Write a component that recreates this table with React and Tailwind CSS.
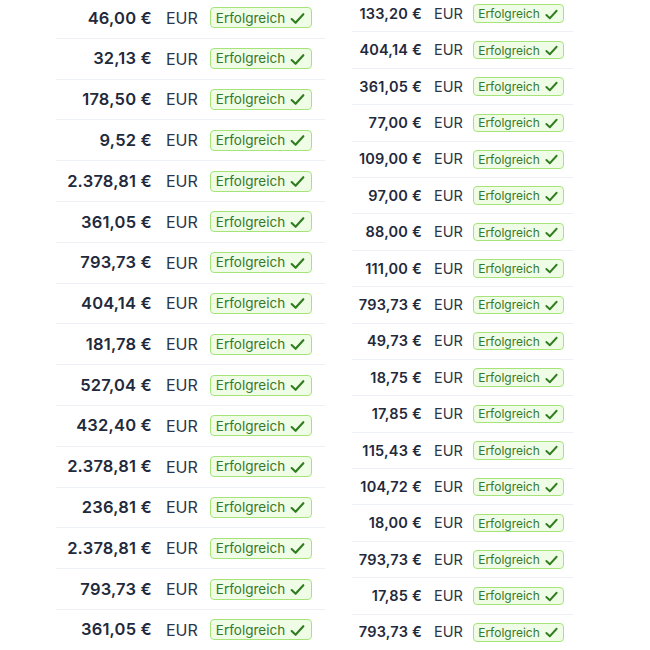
const left = [
  '46,00', '32,13', '178,50', '9,52', '2.378,81', '361,05', '793,73', '404,14',
  '181,78', '527,04', '432,40', '2.378,81', '236,81', '2.378,81', '793,73', '361,05',
]

const right = [
  '133,20', '404,14', '361,05', '77,00', '109,00', '97,00', '88,00', '111,00', '793,73',
  '49,73', '18,75', '17,85', '115,43', '104,72', '18,00', '793,73', '17,85', '793,73',
]

function Check({ size }) {
  return (
    <svg width={size} height={size} viewBox="0 0 16 16" fill="none" className="shrink-0">
      <path d="M2.5 8.5 L6.2 12 L13.5 4" stroke="#2f7d1f" strokeWidth="2" strokeLinecap="round" strokeLinejoin="round" />
    </svg>
  )
}

export default function App() {
  return (
    <div className="flex h-[650px] w-[650px] overflow-hidden bg-white pl-[56px] gap-[27px] font-['Inter',sans-serif] text-[#1f2a3c]">
      {/* Left list */}
      <div className="mt-[-2px] w-[269px] shrink-0">
        {left.map((v, i) => (
          <div key={i} className="flex h-[40.8px] items-center border-b border-[#edf1f6]">
            <span className="w-[96px] text-right text-[16.5px] font-semibold tracking-[0.2px]">{v} €</span>
            <span className="ml-[14px] w-[30px] text-[16px] text-[#2b3546]">EUR</span>
            <span className="ml-[14px] flex h-[21px] w-[102px] items-center justify-center gap-[4px] rounded-[4px] border border-[#a6e47a] bg-[#f0fde6] pt-px text-[13.5px] leading-none text-[#37792a]">
              Erfolgreich
              <Check size={17} />
            </span>
          </div>
        ))}
      </div>

      {/* Right list */}
      <div className="mt-[-4px] w-[221px] shrink-0">
        {right.map((v, i) => (
          <div key={i} className="flex h-[36.4px] items-center border-b border-[#edf1f6]">
            <span className="w-[70px] text-right text-[14.5px] font-semibold tracking-[0.2px]">{v} €</span>
            <span className="ml-[12px] w-[28px] text-[14.5px] text-[#2b3546]">EUR</span>
            <span className="ml-[11px] flex h-[18.5px] w-[91px] items-center justify-center gap-[4px] rounded-[4px] border border-[#a6e47a] bg-[#f0fde6] pt-px text-[12px] leading-none text-[#37792a]">
              Erfolgreich
              <Check size={15} />
            </span>
          </div>
        ))}
      </div>
    </div>
  )
}
